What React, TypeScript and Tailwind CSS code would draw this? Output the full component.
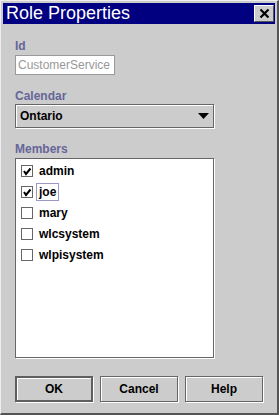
import React from "react";

const members = [
  { name: "admin", checked: true },
  { name: "joe", checked: true, focused: true },
  { name: "mary", checked: false },
  { name: "wlcsystem", checked: false },
  { name: "wlpisystem", checked: false },
];

const Check = ({ checked }: { checked: boolean }) => (
  <div className="w-[12px] h-[12px] border border-[#666666] bg-white shadow-[1px_1px_0_#ffffff] flex items-center justify-center shrink-0">
    {checked && (
      <svg width="10" height="10" viewBox="0 0 10 10">
        <path d="M2 5 L4 8 L8.5 2.5" fill="none" stroke="#000" strokeWidth="2" />
      </svg>
    )}
  </div>
);

const Button = ({ label, primary }: { label: string; primary?: boolean }) => (
  <button
    className={
      "w-[78px] h-[26px] bg-[#cccccc] text-[12px] font-bold text-black shadow-[1px_1px_0_#ffffff,inset_1px_1px_0_#ffffff] " +
      (primary ? "border-2 border-[#5e5e5e]" : "border border-[#666666]")
    }
  >
    {label}
  </button>
);

const App = () => {
  return (
    <div className="w-[279px] h-[415px] bg-[#cccccc] border-t border-l border-[#eeeeee] border-r-2 border-b-2 border-r-[#555555] border-b-[#555555] pt-[2px] pl-[2px] pr-[2px] font-['Liberation_Sans',Arial,sans-serif]">
      {/* title bar */}
      <div className="h-[21px] bg-[#000080] flex items-center justify-between pl-[3px] pr-[1px]">
        <span className="text-white text-[18px] leading-[21px]">Role Properties</span>
        <div className="w-[20px] h-[17px] bg-[#cccccc] border border-t-white border-l-white border-r-[#555555] border-b-[#555555] flex items-center justify-center">
          <svg width="11" height="11" viewBox="0 0 11 11">
            <path d="M1.5 1.5 L9.5 9.5 M9.5 1.5 L1.5 9.5" stroke="#000" strokeWidth="2.2" />
          </svg>
        </div>
      </div>

      <div className="pl-[12px]">
        <div className="mt-[15px] h-[14px] leading-[14px] text-[12px] font-bold text-[#666699]">Id</div>
        <div className="mt-[2px] w-[100px] h-[20px] border border-[#999999] bg-white flex items-center pl-[2px] text-[12px] text-[#999999]">
          CustomerService
        </div>

        <div className="mt-[14px] h-[14px] leading-[14px] text-[12px] font-bold text-[#666699]">Calendar</div>
        <div className="mt-[1px] w-[199px] h-[24px] border border-[#666666] shadow-[1px_1px_0_#ffffff,inset_1px_1px_0_#ffffff] flex items-center justify-between pl-[4px] pr-[4px]">
          <span className="text-[12px] font-bold text-black">Ontario</span>
          <svg width="11" height="6" viewBox="0 0 11 6">
            <path d="M0 0 H11 L5.5 6 Z" fill="#000" />
          </svg>
        </div>

        <div className="mt-[14px] h-[14px] leading-[14px] text-[12px] font-bold text-[#666699]">Members</div>
        <div className="mt-[2px] w-[199px] h-[200px] border border-[#666666] shadow-[1px_1px_0_#ffffff] bg-white pt-[1px] pl-[5px]">
          {members.map((m) => (
            <div key={m.name} className="h-[21px] flex items-center gap-[3px]">
              <Check checked={m.checked} />
              <span
                className={
                  "text-[12px] font-bold text-black leading-[16px] px-[2px] border " +
                  (m.focused ? "border-[#9999cc]" : "border-transparent")
                }
              >
                {m.name}
              </span>
            </div>
          ))}
        </div>

        <div className="mt-[18px] flex gap-[7px]">
          <Button label="OK" primary />
          <Button label="Cancel" />
          <Button label="Help" />
        </div>
      </div>
    </div>
  );
};

export default App;
